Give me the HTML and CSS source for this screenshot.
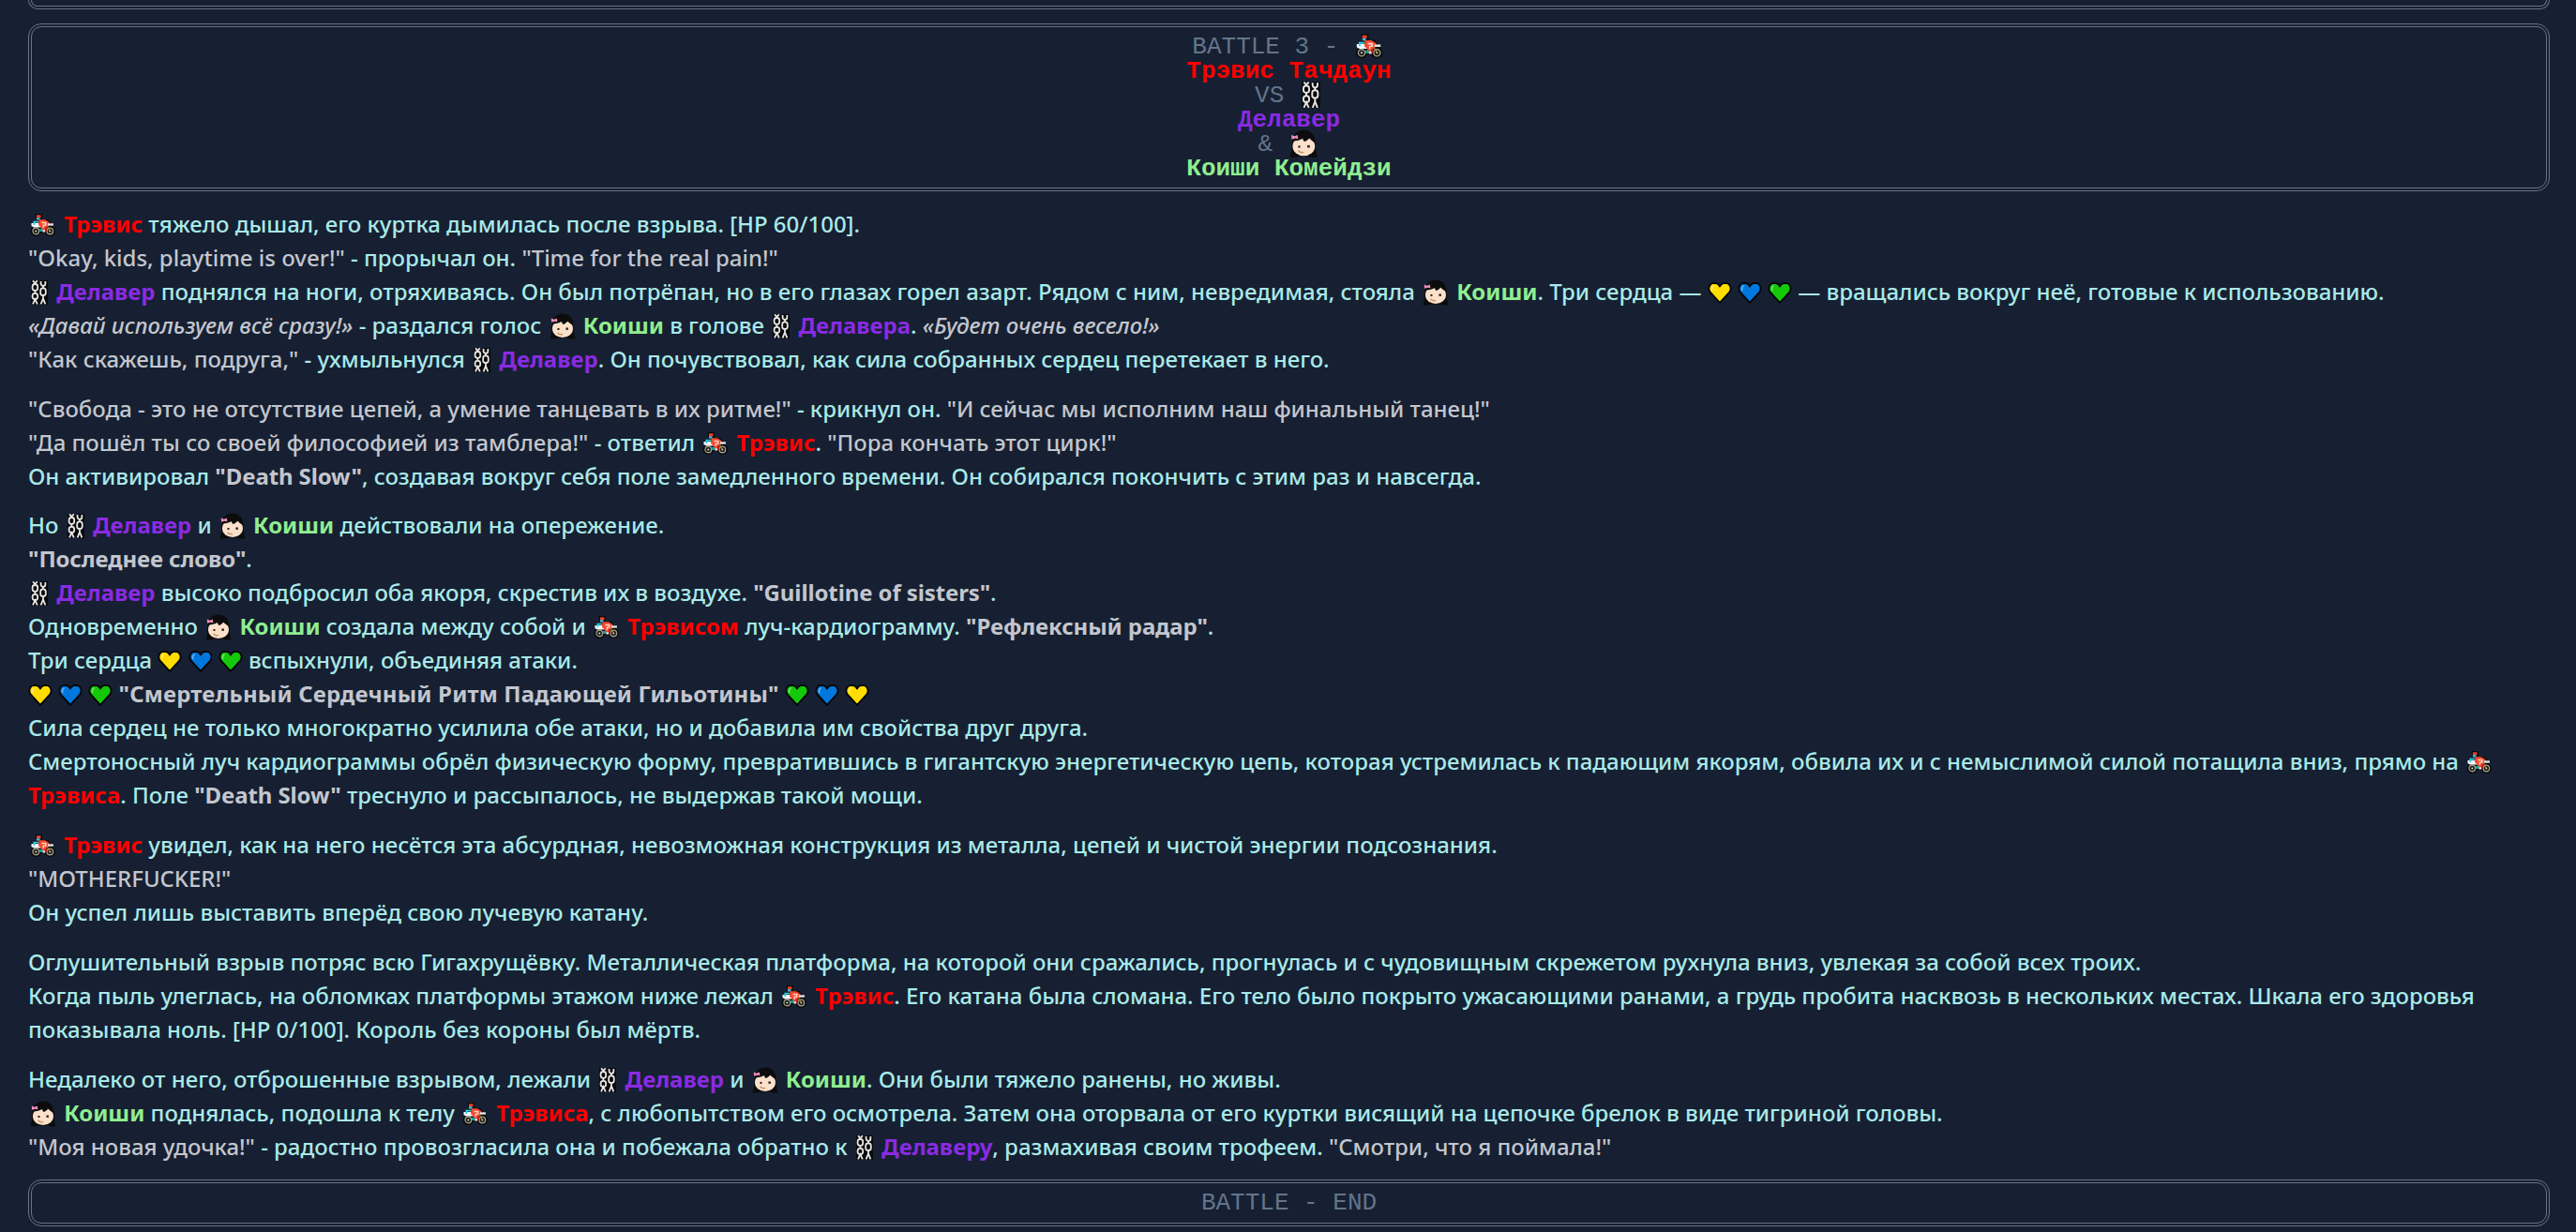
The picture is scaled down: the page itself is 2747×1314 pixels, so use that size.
FILE: index.html
```html
<!DOCTYPE html>
<html lang="ru">
<head>
<meta charset="utf-8">
<title>Battle 3</title>
<link rel="stylesheet" href="styles.css">
</head>
<body>
<svg class="defs" aria-hidden="true">
  <symbol id="bike" viewBox="0 0 32 30">
    <g transform="translate(1 0)">
    <path d="M6.500 3h7.500v6h6.500l2.500 4 3 .5v3l-2 1 3 3.500-5 1-4 1h-6l-5-1-3-.5 1-3-1-2 1-4 3-2z" fill="#0a0a0a"/>
    <circle cx="7.300" cy="21.500" r="5.600" fill="#0a0a0a"/><circle cx="22.400" cy="21.500" r="5.600" fill="#0a0a0a"/>
    <circle cx="7.300" cy="21.500" r="3.300" fill="#1c1c1c" stroke="#a09f8c" stroke-width="1.300"/><circle cx="22.400" cy="21.500" r="3.300" fill="#1c1c1c" stroke="#a09f8c" stroke-width="1.300"/>
    <circle cx="7.300" cy="21.500" r="1" fill="#d9d9c8"/><circle cx="22.400" cy="21.500" r="1" fill="#d9d9c8"/>
    <rect x="8" y="4.300" width="4.500" height="2.900" fill="#f0402e"/><rect x="8" y="7.200" width="3.500" height="2.400" fill="#45bcd4"/>
    <path d="M2.500 13h8.500v2.800h2.500v1.700H5L2.500 16z" fill="#fafafa"/><path d="M4.500 10.800h5.500v1.800H6.300V15H4.500z" fill="#2ad4e6"/>
    <path d="M10.500 9.300h6.500l4.500 2.700v3.500l-3 2-2 3.300h-2.800l-1-3.300-2.700-2.500z" fill="#f5492f"/><path d="M13.500 11.800h5v3.900h-2.400v2.100h-1.500v-3.200h2.400v-1.300h-3.500z" fill="#ffd6c6"/>
    <rect x="20" y="13.300" width="6" height="2.400" fill="#e4e4e4"/><rect x="11" y="19" width="3.500" height="3" fill="#10a596"/><rect x="14.500" y="20.300" width="2.800" height="2.200" fill="#f0f0f0"/><rect x="17" y="18" width="2" height="4.200" fill="#b81c1c"/>
    <path d="M19.500 16.500l3 5" stroke="#b88a30" stroke-width="1.100"/>
    </g>
  </symbol>
  <symbol id="chain" viewBox="0 0 22 30">
    <path d="M2 2h6v1h4V2h8v26h-8v-1H8v1H2z" fill="#0a0a0a"/>
    <g fill="none" stroke="#e6e6e6" stroke-width="1.800">
      <path d="M4 2.500l2.400 2.500 2.400-2.500"/><rect x="3.600" y="6" width="5.600" height="6.800" rx="2.600"/><rect x="3.600" y="16" width="5.600" height="6.200" rx="2.600"/><path d="M6.400 12.800v3.200M4 27.500l2.400-5.300 2.400 5.300"/>
      <path d="M12.600 3v2.400a2.400 2.400 0 0 0 4.800 0V3"/><rect x="12.200" y="10.300" width="5.600" height="7.700" rx="2.600"/><path d="M15 8v2.300M15 18v3.500M12.600 27.500l2.400-6 2.400 6"/>
    </g>
  </symbol>
  <symbol id="girl" viewBox="0 0 30 30">
    <path d="M15 1.500C8 1.500 4 7 3.500 12L3 22 1.500 28.500H7.500L10 27.500H20L22.500 28.500H28.500L27 22 26.500 12C26 7 22 1.500 15 1.500Z" fill="#0c0c0c"/>
    <ellipse cx="15" cy="17.500" rx="11" ry="9.500" fill="#fbe0cc"/>
    <path d="M4 12.500C5 7 10 3.500 15 3.500 21 3.500 25.500 8 26 13.500 23.500 13 21.500 11 20.500 9.500 19.500 11 17.500 12.500 15.500 13 14.500 12 14 11 14 10 11.500 11.500 8 12.500 4 12.500Z" fill="#0c0c0c"/>
    <path d="M2.800 6.500l3 1.200 3-1.200.6 3.800-3-.6-3.300 1.100z" fill="#f28cbc"/>
    <rect x="9.500" y="17" width="2" height="2" fill="#2a1c14"/><rect x="18.500" y="16.500" width="2.400" height="2.400" fill="#2a1c14"/>
    <path d="M9.500 21.800c1.500 1.800 3.500 2.300 5.500 1.700" fill="none" stroke="#c99b62" stroke-width="1.500"/>
  </symbol>
  <symbol id="heart" viewBox="0 0 26 30">
    <path d="M13 26L2.500 14.500C.3 11 1.500 5 7 4.800c3 0 5 1.700 6 3.700 1-2 3-3.700 6-3.700 5.500.2 6.700 6.200 4.500 9.700z" fill="currentColor" stroke="#050505" stroke-width="1.800" stroke-linejoin="round"/>
    <path d="M5 13c-1-2 0-4 1.500-5" fill="none" stroke="#fff" stroke-opacity=".45" stroke-width="1.500"/>
  </symbol>
</svg>

<div class="box box-cut"></div>

<div class="box">
  <div class="mono-line dim">BATTLE 3 - <svg class="emoji emoji-wide"><use href="#bike"/></svg></div>
  <div class="mono-line red strong">Трэвис Тачдаун</div>
  <div class="mono-line dim">VS <svg class="emoji emoji-chain"><use href="#chain"/></svg></div>
  <div class="mono-line purple strong">Делавер</div>
  <div class="mono-line dim">&amp; <svg class="emoji emoji-wide"><use href="#girl"/></svg></div>
  <div class="mono-line green strong">Коиши Комейдзи</div>
</div>

<main class="story">
<p><svg class="emoji emoji-wide"><use href="#bike"/></svg> <b class="red">Трэвис</b> тяжело дышал, его куртка дымилась после взрыва. [HP 60/100].<br>
<span class="say">"Okay, kids, playtime is over!"</span> - прорычал он. <span class="say">"Time for the real pain!"</span><br>
<svg class="emoji emoji-chain"><use href="#chain"/></svg> <b class="purple">Делавер</b> поднялся на ноги, отряхиваясь. Он был потрёпан, но в его глазах горел азарт. Рядом с ним, невредимая, стояла <svg class="emoji emoji-wide"><use href="#girl"/></svg> <b class="green">Коиши</b>. Три сердца — <svg class="emoji emoji-heart yellow"><use href="#heart"/></svg> <svg class="emoji emoji-heart blue"><use href="#heart"/></svg> <svg class="emoji emoji-heart lime"><use href="#heart"/></svg> — вращались вокруг неё, готовые к использованию.<br>
<em class="say">«Давай используем всё сразу!»</em> - раздался голос <svg class="emoji emoji-wide"><use href="#girl"/></svg> <b class="green">Коиши</b> в голове <svg class="emoji emoji-chain"><use href="#chain"/></svg> <b class="purple">Делавера</b>. <em class="say">«Будет очень весело!»</em><br>
<span class="say">"Как скажешь, подруга,"</span> - ухмыльнулся <svg class="emoji emoji-chain"><use href="#chain"/></svg> <b class="purple">Делавер</b>. Он почувствовал, как сила собранных сердец перетекает в него.</p>

<p><span class="say">"Свобода - это не отсутствие цепей, а умение танцевать в их ритме!"</span> - крикнул он. <span class="say">"И сейчас мы исполним наш финальный танец!"</span><br>
<span class="say">"Да пошёл ты со своей философией из тамблера!"</span> - ответил <svg class="emoji emoji-wide"><use href="#bike"/></svg> <b class="red">Трэвис</b>. <span class="say">"Пора кончать этот цирк!"</span><br>
Он активировал <b class="say">"Death Slow"</b>, создавая вокруг себя поле замедленного времени. Он собирался покончить с этим раз и навсегда.</p>

<p>Но <svg class="emoji emoji-chain"><use href="#chain"/></svg> <b class="purple">Делавер</b> и <svg class="emoji emoji-wide"><use href="#girl"/></svg> <b class="green">Коиши</b> действовали на опережение.<br>
<b class="say">"Последнее слово"</b>.<br>
<svg class="emoji emoji-chain"><use href="#chain"/></svg> <b class="purple">Делавер</b> высоко подбросил оба якоря, скрестив их в воздухе. <b class="say">"Guillotine of sisters"</b>.<br>
Одновременно <svg class="emoji emoji-wide"><use href="#girl"/></svg> <b class="green">Коиши</b> создала между собой и <svg class="emoji emoji-wide"><use href="#bike"/></svg> <b class="red">Трэвисом</b> луч-кардиограмму. <b class="say">"Рефлексный радар"</b>.<br>
Три сердца <svg class="emoji emoji-heart yellow"><use href="#heart"/></svg> <svg class="emoji emoji-heart blue"><use href="#heart"/></svg> <svg class="emoji emoji-heart lime"><use href="#heart"/></svg> вспыхнули, объединяя атаки.<br>
<svg class="emoji emoji-heart yellow"><use href="#heart"/></svg> <svg class="emoji emoji-heart blue"><use href="#heart"/></svg> <svg class="emoji emoji-heart lime"><use href="#heart"/></svg> <b class="say loud">"Смертельный Сердечный Ритм Падающей Гильотины"</b> <svg class="emoji emoji-heart lime"><use href="#heart"/></svg> <svg class="emoji emoji-heart blue"><use href="#heart"/></svg> <svg class="emoji emoji-heart yellow"><use href="#heart"/></svg><br>
Сила сердец не только многократно усилила обе атаки, но и добавила им свойства друг друга.<br>
Смертоносный луч кардиограммы обрёл физическую форму, превратившись в гигантскую энергетическую цепь, которая устремилась к падающим якорям, обвила их и с немыслимой силой потащила вниз, прямо на <svg class="emoji emoji-wide"><use href="#bike"/></svg> <b class="red">Трэвиса</b>. Поле <b class="say">"Death Slow"</b> треснуло и рассыпалось, не выдержав такой мощи.</p>

<p><svg class="emoji emoji-wide"><use href="#bike"/></svg> <b class="red">Трэвис</b> увидел, как на него несётся эта абсурдная, невозможная конструкция из металла, цепей и чистой энергии подсознания.<br>
<span class="say">"MOTHERFUCKER!"</span><br>
Он успел лишь выставить вперёд свою лучевую катану.</p>

<p>Оглушительный взрыв потряс всю Гигахрущёвку. Металлическая платформа, на которой они сражались, прогнулась и с чудовищным скрежетом рухнула вниз, увлекая за собой всех троих.<br>
Когда пыль улеглась, на обломках платформы этажом ниже лежал <svg class="emoji emoji-wide"><use href="#bike"/></svg> <b class="red">Трэвис</b>. Его катана была сломана. Его тело было покрыто ужасающими ранами, а грудь пробита насквозь в нескольких местах. Шкала его здоровья показывала ноль. [HP 0/100]. Король без короны был мёртв.</p>

<p>Недалеко от него, отброшенные взрывом, лежали <svg class="emoji emoji-chain"><use href="#chain"/></svg> <b class="purple">Делавер</b> и <svg class="emoji emoji-wide"><use href="#girl"/></svg> <b class="green">Коиши</b>. Они были тяжело ранены, но живы.<br>
<svg class="emoji emoji-wide"><use href="#girl"/></svg> <b class="green">Коиши</b> поднялась, подошла к телу <svg class="emoji emoji-wide"><use href="#bike"/></svg> <b class="red">Трэвиса</b>, с любопытством его осмотрела. Затем она оторвала от его куртки висящий на цепочке брелок в виде тигриной головы.<br>
<span class="say">"Моя новая удочка!"</span> - радостно провозгласила она и побежала обратно к <svg class="emoji emoji-chain"><use href="#chain"/></svg> <b class="purple">Делаверу</b>, размахивая своим трофеем. <span class="say">"Смотри, что я поймала!"</span></p>
</main>

<div class="box box-end">
  <div class="mono-line dim">BATTLE - END</div>
</div>
</body>
</html>
```

FILE: styles.css
```css
* { box-sizing: border-box; }

html, body { margin: 0; height: 100%; }

body {
  background: #162032;
  color: #a9e9e9;
  font-family: "Noto Sans", sans-serif;
  font-size: 23.97px;
  font-weight: 500;
  line-height: 36px;
  padding: 0 28px 0 30px;
  overflow: hidden;
}

.defs { display: none; }

.box {
  border: 4px double #64748b;
  border-radius: 14px;
  padding: 8px 16px 7px;
  margin-bottom: 16.8px;
  text-align: center;
}

.box-cut {
  height: 10px;
  padding: 0;
  border-top: 0;
  border-radius: 0 0 14px 14px;
  margin-bottom: 15px;
}

.box-end {
  margin: 0;
  padding: 8px 16px;
  height: 50px;
}

.mono-line {
  font-family: "Liberation Mono", monospace;
  font-size: 26px;
  font-weight: 400;
  line-height: 26px;
}

.mono-line .emoji {
  vertical-align: baseline;
  margin: -8px 0 -8px;
}

.story p { margin: 0 0 16.8px; }

.dim { color: #64748b; }
.mono-line.strong { font-weight: 700; }
.red { color: #ff0000; }
.purple { color: #8a2be2; }
.green { color: #90ee90; }
.say { color: #c3c6ce; }
b.say { letter-spacing: -0.1px; }
b.loud { letter-spacing: 0.16px; }

.yellow { color: #ffdd00; }
.blue { color: #0077dd; }
.lime { color: #14c80a; }

.emoji {
  height: 1.25em;
  vertical-align: -0.29em;
}

.emoji-wide { width: 1.333em; }
.emoji-chain { width: 1em; }
.emoji-heart { width: 1.083em; }
```
